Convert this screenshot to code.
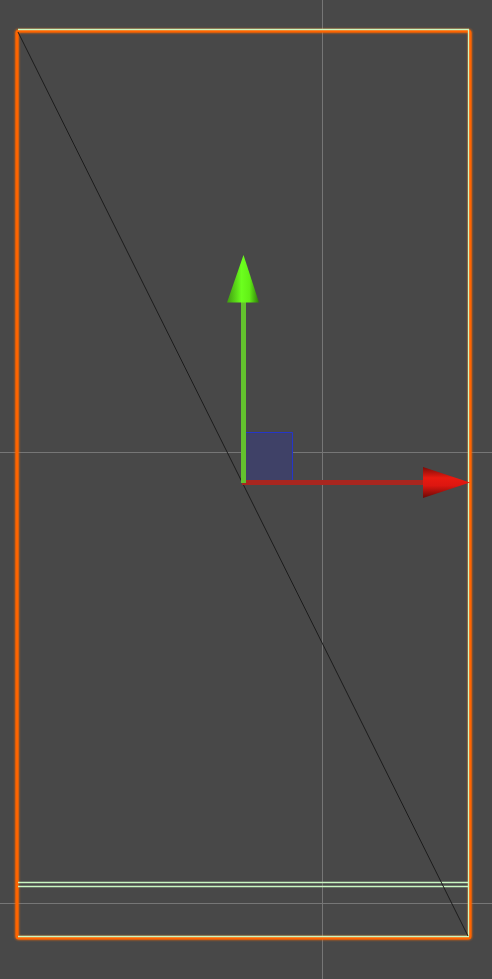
import React from "react";

const SceneGizmo: React.FC = () => {
  return (
    <svg width="492" height="979" viewBox="0 0 492 979" className="block">
      <defs>
        <linearGradient id="greenCone" x1="0" y1="0" x2="1" y2="0">
          <stop offset="0" stopColor="#3f9a10" />
          <stop offset="0.45" stopColor="#6cff1e" />
          <stop offset="0.7" stopColor="#62f016" />
          <stop offset="1" stopColor="#2f7a0a" />
        </linearGradient>
        <linearGradient id="redCone" x1="0" y1="0" x2="0" y2="1">
          <stop offset="0" stopColor="#7a0c08" />
          <stop offset="0.35" stopColor="#e81a10" />
          <stop offset="0.6" stopColor="#dd1610" />
          <stop offset="1" stopColor="#6a0a06" />
        </linearGradient>
        <filter id="soft" x="-5%" y="-5%" width="110%" height="110%">
          <feGaussianBlur stdDeviation="0.8" />
        </filter>
      </defs>

      {/* grid lines */}
      <line x1="322.5" y1="0" x2="322.5" y2="979" stroke="#767676" strokeWidth="1" />
      <line x1="0" y1="452.5" x2="492" y2="452.5" stroke="#767676" strokeWidth="1" />
      <line x1="0" y1="903.5" x2="492" y2="903.5" stroke="#767676" strokeWidth="1" />

      {/* camera bounds */}
      <rect x="17" y="31" width="453" height="907" rx="2" fill="none" stroke="#ff6a00" strokeWidth="4" filter="url(#soft)" opacity="0.8" />
      <rect x="17" y="31" width="453" height="907" rx="2" fill="none" stroke="#ff6400" strokeWidth="3" />
      <line x1="18" y1="29.5" x2="469" y2="29.5" stroke="#c9f7c2" strokeWidth="1.3" />
      <line x1="468.5" y1="29" x2="468.5" y2="936" stroke="#c9f7c2" strokeWidth="1.3" />
      <line x1="18" y1="936.5" x2="469" y2="936.5" stroke="#c9f7c2" strokeWidth="1.3" />
      <line x1="18" y1="882.5" x2="469" y2="882.5" stroke="#c9f7c2" strokeWidth="1.3" />
      <line x1="18" y1="886.5" x2="469" y2="886.5" stroke="#c9f7c2" strokeWidth="1.3" />

      {/* diagonal */}
      <line x1="18" y1="32" x2="468" y2="936" stroke="#1c1c1c" strokeWidth="1" />

      {/* plane handle */}
      <rect x="243" y="432.5" width="50" height="49" fill="#3f4167" />
      <polyline points="246,432.5 292.5,432.5 292.5,481" fill="none" stroke="#2536c8" strokeWidth="1" />

      {/* x axis */}
      <rect x="242" y="480" width="182" height="5" fill="#a8261f" />
      <polygon points="423,467 470,482.5 423,498" fill="url(#redCone)" />

      {/* y axis */}
      <rect x="241" y="302" width="5" height="181" fill="#63c22e" />
      <polygon points="243.5,255 259,302.5 227,302.5" fill="url(#greenCone)" />
    </svg>
  );
};

export default function App() {
  return (
    <div className="w-[492px] h-[979px] bg-[#484848] overflow-hidden">
      <SceneGizmo />
    </div>
  );
}
